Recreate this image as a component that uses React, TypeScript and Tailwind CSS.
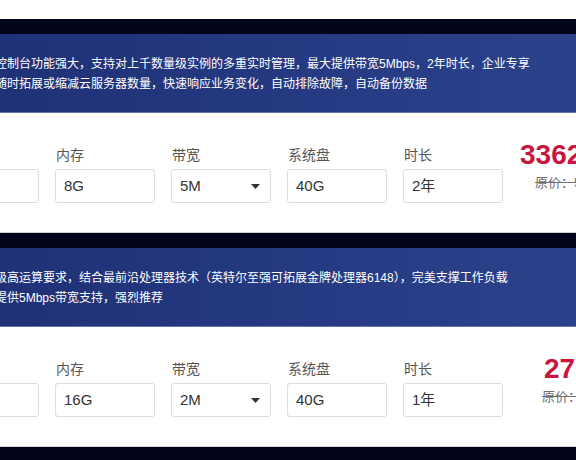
import type { ReactNode } from "react";

type Field = {
  label: string;
  value: string;
  select?: boolean;
};

type Plan = {
  lines: string[];
  fields: Field[];
  price: string;
  original: string;
  priceClass: string;
  originalClass: string;
};

const plans: Plan[] = [
  {
    lines: [
      "控制台功能强大，支持对上千数量级实例的多重实时管理，最大提供带宽5Mbps，2年时长，企业专享",
      "随时拓展或缩减云服务器数量，快速响应业务变化，自动排除故障，自动备份数据",
    ],
    fields: [
      { label: "CPU", value: "4核" },
      { label: "内存", value: "8G" },
      { label: "带宽", value: "5M", select: true },
      { label: "系统盘", value: "40G" },
      { label: "时长", value: "2年" },
    ],
    price: "3362元",
    original: "原价：5600元",
    priceClass: "ml-[17px]",
    originalClass: "ml-[32px]",
  },
  {
    lines: [
      "级高运算要求，结合最前沿处理器技术（英特尔至强可拓展金牌处理器6148），完美支撑工作负载",
      "提供5Mbps带宽支持，强烈推荐",
    ],
    fields: [
      { label: "CPU", value: "8核" },
      { label: "内存", value: "16G" },
      { label: "带宽", value: "2M", select: true },
      { label: "系统盘", value: "40G" },
      { label: "时长", value: "1年" },
    ],
    price: "2760元",
    original: "原价：4600元",
    priceClass: "ml-[41px]",
    originalClass: "ml-[39px]",
  },
  {
    lines: ["适用于中小型网站及应用，稳定可靠", "按需配置，灵活升级"],
    fields: [
      { label: "CPU", value: "2核" },
      { label: "内存", value: "4G" },
      { label: "带宽", value: "1M", select: true },
      { label: "系统盘", value: "40G" },
      { label: "时长", value: "1年" },
    ],
    price: "980元",
    original: "原价：1800元",
    priceClass: "ml-[41px]",
    originalClass: "ml-[39px]",
  },
];

function Caret() {
  return (
    <svg width="9" height="5" viewBox="0 0 9 5" className="shrink-0">
      <path d="M0 0h9L4.5 5z" fill="#333" />
    </svg>
  );
}

function FieldBox({ field }: { field: Field }): ReactNode {
  return (
    <div className="flex w-[100px] shrink-0 flex-col">
      <span className="h-[20px] pl-px text-[14px] leading-[20px] text-[#555]">{field.label}</span>
      <div className="mt-[4px] flex h-[34px] items-center justify-between rounded-[3px] border border-[#dcdcdc] bg-white pl-[8px] pr-[10px] text-[15px] text-[#333]">
        <span>{field.value}</span>
        {field.select ? <Caret /> : null}
      </div>
    </div>
  );
}

function PlanCard({ plan }: { plan: Plan }) {
  return (
    <div>
      <div className="h-[15px] bg-[#03061a]" />
      <div className="h-[79px] border-b border-[#6677b0] bg-gradient-to-r from-[#1f3177] to-[#2b428b] pt-[20px] text-[12px] leading-[20px] text-white">
        {plan.lines.map((line) => (
          <p key={line} className="-ml-[5px] whitespace-nowrap">
            {line}
          </p>
        ))}
      </div>
      <div className="flex h-[120px] border-b border-[#d2d2d2] bg-white">
        <div className="-ml-[61px] flex shrink-0 gap-[16px] pt-[32px]">
          {plan.fields.map((field) => (
            <FieldBox key={field.label} field={field} />
          ))}
        </div>
        <div className="flex shrink-0 flex-col pt-[27px]">
          <span
            className={`${plan.priceClass} whitespace-nowrap text-[28px] font-bold leading-[30px] text-[#c9163f]`}
          >
            {plan.price}
          </span>
          <span
            className={`${plan.originalClass} mt-[4px] whitespace-nowrap text-[13px] leading-[18px] text-[#6f6f6f] line-through`}
          >
            {plan.original}
          </span>
        </div>
      </div>
    </div>
  );
}

export default function App() {
  return (
    <div className="h-[460px] w-[576px] overflow-hidden bg-white pt-[19px] font-['Liberation_Sans','Noto_Sans_CJK_SC',sans-serif]">
      {plans.map((plan) => (
        <PlanCard key={plan.price} plan={plan} />
      ))}
    </div>
  );
}
